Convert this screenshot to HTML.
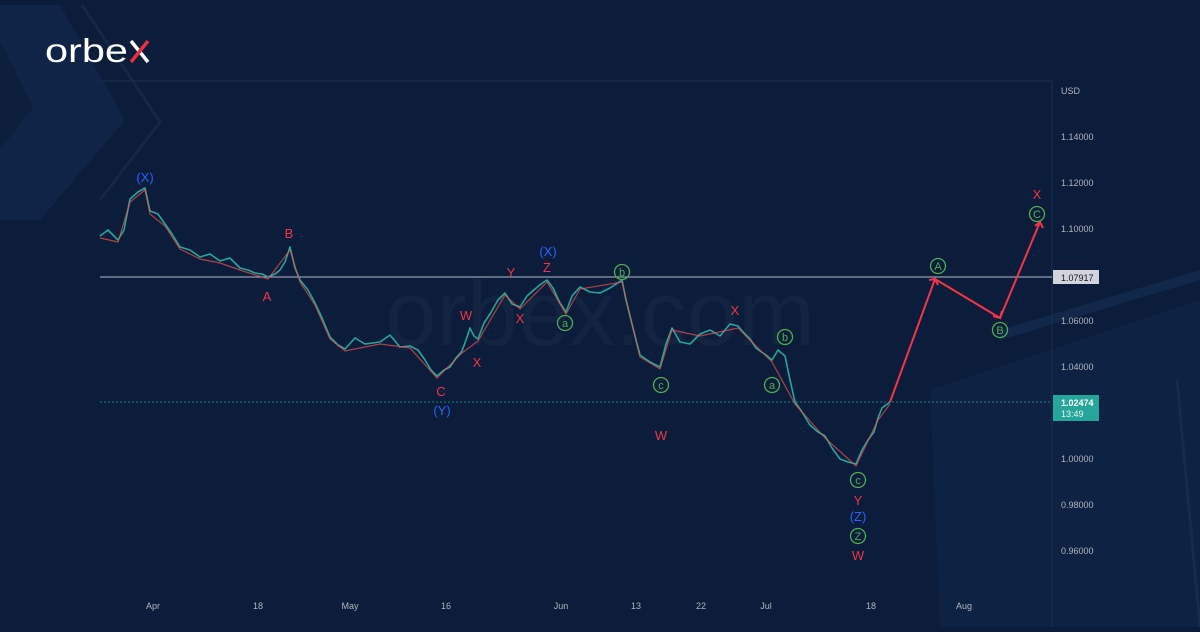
<!DOCTYPE html>
<html><head><meta charset="utf-8"><style>
html,body{margin:0;padding:0;}
body{width:1200px;height:627px;overflow:hidden;background:#0b1d3a;font-family:"Liberation Sans",sans-serif;}
</style></head><body>
<svg width="1200" height="627" viewBox="0 0 1200 627" xmlns="http://www.w3.org/2000/svg" font-family="Liberation Sans, sans-serif">
<rect width="1200" height="627" fill="#0b1d3a"/>
<!-- decorative chevrons -->
<polygon points="0,5 60,5 125,120 40,220 0,220" fill="#0f2446"/>
<polygon points="0,40 33,107 0,150" fill="#0c1f3d"/>
<polyline points="82,5 160,122 100,200" fill="none" stroke="#112848" stroke-width="3"/>
<polygon points="930,390 1200,300 1200,627 940,627" fill="#0e2343"/>
<polygon points="1000,330 1200,270 1200,280 1000,340" fill="#12284a"/>
<line x1="1177" y1="380" x2="1200" y2="627" stroke="#162c4c" stroke-width="3"/>
<!-- watermark -->
<text x="600" y="345" font-size="92" fill="#ffffff" fill-opacity="0.03" text-anchor="middle">orbex.com</text>
<!-- logo -->
<text x="45" y="62" font-size="33" fill="#ffffff" textLength="83" lengthAdjust="spacingAndGlyphs">orbe</text>
<path d="M131 41 L148 62" stroke="#ffffff" stroke-width="3.5"/>
<path d="M148 41 L131 62" stroke="#e8303f" stroke-width="3.5"/>
<!-- grid / lines -->
<line x1="100" y1="81" x2="1052" y2="81" stroke="#1a2f50" stroke-width="1"/>
<line x1="1052" y1="81" x2="1052" y2="627" stroke="#1a2f50" stroke-width="1"/>
<line x1="100" y1="277" x2="1052" y2="277" stroke="#b5bcc8" stroke-width="1"/>
<line x1="100" y1="402" x2="1052" y2="402" stroke="#26a69a" stroke-width="1" stroke-dasharray="2,2" opacity="0.7"/>
<!-- price series -->
<polyline fill="none" stroke="#26a69a" stroke-width="1.6" stroke-linejoin="round" points="100,236 108,230 118,240 124,230 130,199 138,192 145,188 150,211 158,214 165,224 172,234 180,247 190,250 200,257 210,254 220,261 230,258 240,268 248,270 255,273 262,274 268,277 275,274 280,270 285,262 290,247 295,268 300,280 308,290 315,303 322,318 330,337 338,345 345,349 355,338 365,344 380,342 390,335 400,347 410,346 418,350 425,360 431,370 437,376 444,370 450,367 456,358 462,351 466,340 470,328 474,336 478,339 484,323 490,314 498,300 505,293 512,304 520,307 527,296 535,289 541,284 547,280 553,288 560,303 566,312 572,296 580,287 590,292 600,293 610,288 622,280 626,300 630,316 636,340 640,355 650,362 660,367 666,344 672,328 680,342 690,344 700,334 710,330 720,336 730,324 738,326 744,333 750,339 756,348 760,351 766,355 772,360 778,350 785,356 790,380 795,402 802,412 810,425 818,432 825,436 832,448 840,459 848,462 856,464 862,450 868,440 874,432 878,418 882,408 890,402"/>
<polyline fill="none" stroke="#ef5350" stroke-width="1.2" stroke-opacity="0.7" points="100,238 118,242 130,202 145,190 150,214 165,226 180,249 200,259 220,263 240,270 268,279 290,250 300,282 315,305 330,339 345,351 380,344 410,348 437,378 462,353 478,341 505,295 520,309 547,282 566,314 580,289 622,282 640,357 660,369 672,330 700,336 738,328 772,362 795,404 825,438 856,466 878,420 890,404"/>
<!-- projection -->
<polyline fill="none" stroke="#f23645" stroke-width="2" points="890,402 935,279 1000,318 1040,222"/>
<path d="M929,280 L935,279 L938,285" fill="none" stroke="#f23645" stroke-width="2"/>
<path d="M993,316 L1000,318 L1002,311" fill="none" stroke="#f23645" stroke-width="2"/>
<path d="M1035,226 L1040,222 L1043,228" fill="none" stroke="#f23645" stroke-width="2"/>
<!-- labels -->
<g font-size="13" text-anchor="middle">
<g fill="#2962ff">
<text x="145" y="182">(X)</text><text x="548" y="256">(X)</text><text x="442" y="415">(Y)</text><text x="858" y="521">(Z)</text>
</g>
<g fill="#f23645">
<text x="289" y="238">B</text><text x="267" y="301">A</text><text x="441" y="396">C</text>
<text x="466" y="320">W</text><text x="477" y="367">X</text><text x="511" y="277">Y</text><text x="520" y="323">X</text><text x="547" y="272">Z</text>
<text x="661" y="440">W</text><text x="735" y="315">X</text><text x="858" y="505">Y</text><text x="858" y="560">W</text><text x="1037" y="199">X</text>
</g>
<g fill="none" stroke="#4caf50" stroke-width="1.3">
<circle cx="622" cy="272" r="7.5"/><circle cx="565" cy="323" r="7.5"/><circle cx="661" cy="385" r="7.5"/>
<circle cx="785" cy="337" r="7.5"/><circle cx="772" cy="385" r="7.5"/><circle cx="858" cy="480" r="7.5"/>
<circle cx="858" cy="536" r="7.5"/><circle cx="938" cy="266" r="7.5"/><circle cx="1000" cy="330" r="7.5"/><circle cx="1037" cy="214" r="7.5"/>
</g>
<g fill="#4caf50" font-size="11">
<text x="622" y="276">b</text><text x="565" y="327">a</text><text x="661" y="389">c</text>
<text x="785" y="341">b</text><text x="772" y="389">a</text><text x="858" y="484">c</text>
<text x="858" y="540">Z</text><text x="938" y="270">A</text><text x="1000" y="334">B</text><text x="1037" y="218">C</text>
</g>
</g>
<!-- price axis -->
<g font-size="9" fill="#b2b5be">
<text x="1061" y="94">USD</text>
<text x="1061" y="140">1.14000</text><text x="1061" y="186">1.12000</text><text x="1061" y="232">1.10000</text>
<text x="1061" y="324">1.06000</text><text x="1061" y="370">1.04000</text><text x="1061" y="462">1.00000</text>
<text x="1061" y="508">0.98000</text><text x="1061" y="554">0.96000</text>
</g>
<rect x="1053" y="270" width="46" height="14" fill="#d1d4dc"/>
<text x="1061" y="281" font-size="9" fill="#131722">1.07917</text>
<rect x="1053" y="395" width="46" height="26" fill="#26a69a"/>
<text x="1061" y="406" font-size="9" fill="#fff" font-weight="bold">1.02474</text>
<text x="1061" y="417" font-size="9" fill="#e6f5f3">13:49</text>
<!-- time axis -->
<g font-size="9" fill="#b2b5be" text-anchor="middle">
<text x="153" y="609">Apr</text><text x="258" y="609">18</text><text x="350" y="609">May</text><text x="446" y="609">16</text>
<text x="561" y="609">Jun</text><text x="636" y="609">13</text><text x="701" y="609">22</text><text x="766" y="609">Jul</text>
<text x="871" y="609">18</text><text x="964" y="609">Aug</text>
</g>
</svg>
</body></html>
